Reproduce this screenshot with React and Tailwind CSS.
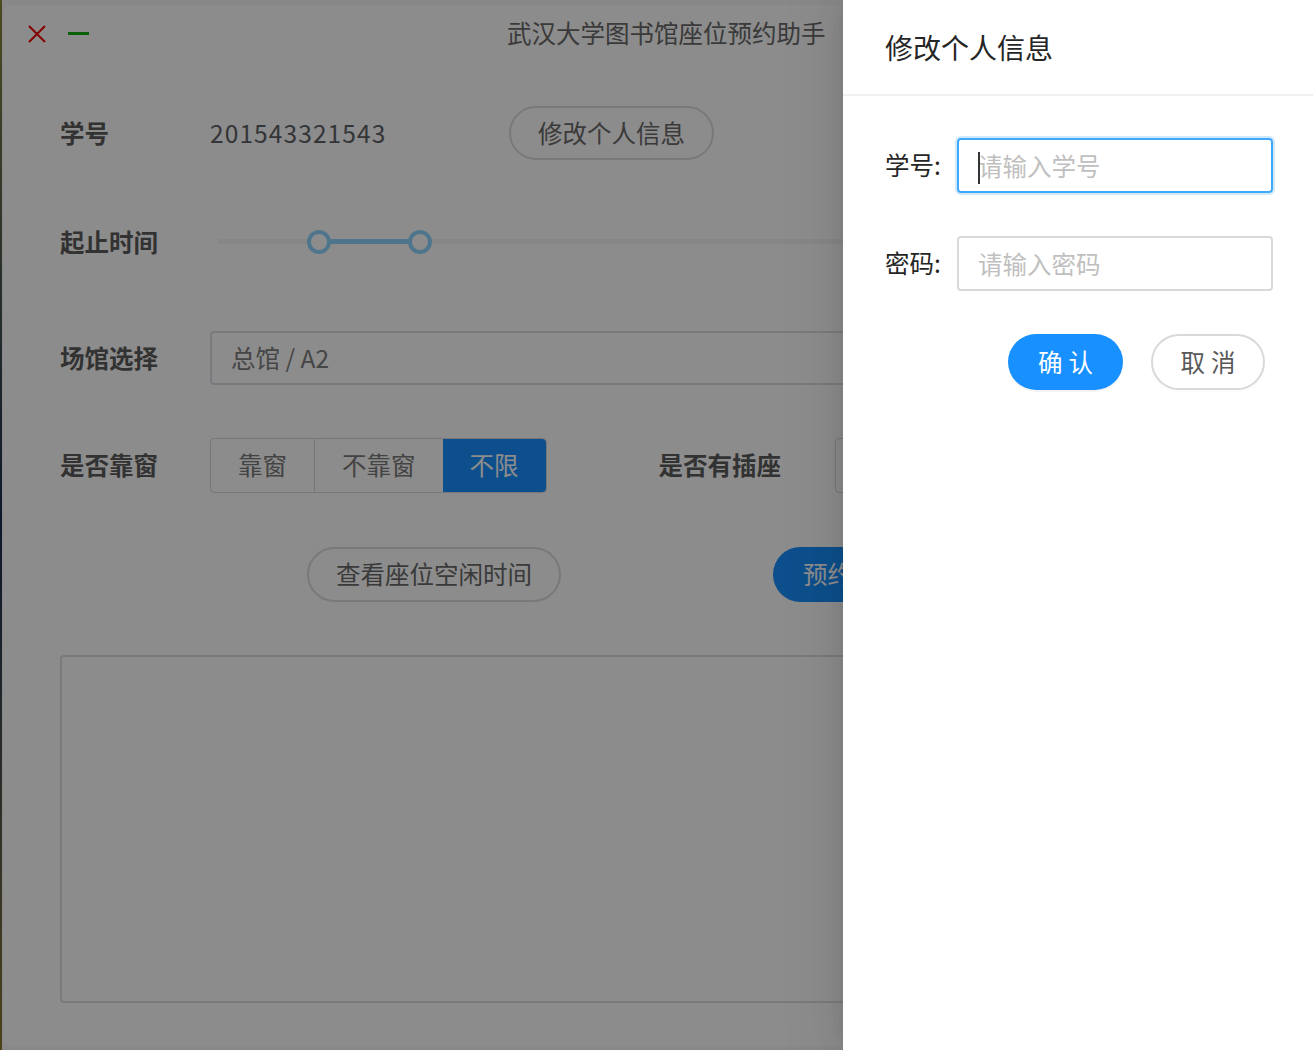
import { useState } from 'react'

const font = { fontFamily: '"Noto Sans CJK SC", "Noto Sans", sans-serif' }

function Label({ children }) {
  return <div className="w-[150px] shrink-0 text-[24.5px] font-bold text-[#5c5c5c]">{children}</div>
}

function Segmented({ options, value }) {
  return (
    <div className="flex h-[55px] rounded-[4px] border border-[#d9d9d9]">
      {options.map((opt, i) => (
        <div
          key={opt}
          className={
            'flex items-center justify-center px-[27px] text-[24.5px] ' +
            (opt === value
              ? 'bg-[#1890ff] text-white rounded-r-[4px]'
              : 'text-[#7a7a7a] ' + (i > 0 ? 'border-l border-[#d9d9d9]' : ''))
          }
        >
          {opt}
        </div>
      ))}
    </div>
  )
}

function TimeRange() {
  return (
    <div className="relative ml-[8px] h-[28px] flex-1">
      <div className="absolute left-0 right-0 top-[11px] h-[5px] rounded-full bg-[#f4f4f4]" />
      <div className="absolute left-[101px] top-[11px] h-[5px] w-[101px] bg-[#91d5ff]" />
      <span className="absolute left-[89px] top-[2px] h-[24px] w-[24px] rounded-full border-[4px] border-[#91d5ff] bg-white" />
      <span className="absolute left-[190px] top-[2px] h-[24px] w-[24px] rounded-full border-[4px] border-[#91d5ff] bg-white" />
    </div>
  )
}

function MainWindow() {
  return (
    <div className="mb-[4px] mt-[5px] flex flex-1 flex-col rounded-[7px] bg-white">
      {/* title bar */}
      <div className="flex h-[56px] items-center pl-[24px]">
        <svg width="20" height="20" viewBox="0 0 20 20" className="mt-[1px]">
          <path d="M2 2 L18 18 M18 2 L2 18" stroke="#f20000" strokeWidth="2" />
        </svg>
        <span className="ml-[21px] h-[3px] w-[21px] bg-[#12b012]" />
        <h1 className="ml-[418px] text-[24.5px] text-[#6a6a6a]">武汉大学图书馆座位预约助手</h1>
      </div>

      <div className="flex flex-col pl-[57px] pr-[60px]">
        <div className="mt-[45px] flex h-[54px] items-center">
          <Label>学号</Label>
          <span className="w-[299px] text-[24.5px] tracking-[1.1px] text-[#606266]">201543321543</span>
          <button className="h-[54px] rounded-full border-2 border-[#dcdcdc] px-[27px] text-[24.5px] text-[#6b6b6b]">
            修改个人信息
          </button>
        </div>

        <div className="mt-[55px] flex h-[54px] items-center">
          <Label>起止时间</Label>
          <TimeRange />
        </div>

        <div className="mt-[62px] flex h-[54px] items-center">
          <Label>场馆选择</Label>
          <div className="flex h-[54px] flex-1 items-center rounded-[4px] border-2 border-[#dcdfe6] px-[19px] text-[24.5px] text-[#808080]">
            总馆 / A2
          </div>
        </div>

        <div className="mt-[53px] flex h-[55px] items-center">
          <Label>是否靠窗</Label>
          <Segmented options={['靠窗', '不靠窗', '不限']} value="不限" />
          <div className="ml-[112px] w-[176px] text-[24.5px] font-bold text-[#5c5c5c]">是否有插座</div>
          <Segmented options={['有插座', '无插座', '不限']} value="不限" />
        </div>

        <div className="mt-[54px] flex h-[55px] items-center pl-[247px]">
          <button className="h-[55px] rounded-full border-2 border-[#dcdcdc] px-[27px] text-[24.5px] text-[#6b6b6b]">
            查看座位空闲时间
          </button>
          <button className="ml-[212px] h-[55px] rounded-full bg-[#1890ff] px-[30px] text-[24.5px] text-white">
            预约座位
          </button>
        </div>

        <div className="mt-[53px] h-[348px] rounded-[4px] border-2 border-[#dcdfe6]" />
      </div>
    </div>
  )
}

function InfoDrawer() {
  const [sid, setSid] = useState('')
  const [pwd, setPwd] = useState('')
  return (
    <aside className="absolute right-0 top-0 flex h-full w-[470px] flex-col bg-white shadow-[-6px_0_16px_-8px_rgba(0,0,0,0.08),-9px_0_28px_0_rgba(0,0,0,0.05),-12px_0_48px_16px_rgba(0,0,0,0.03)]">
      <div className="flex h-[96px] items-center border-b-2 border-[#f0f0f0] pl-[42px]">
        <h2 className="text-[28px] text-[#262626]">修改个人信息</h2>
      </div>
      <div className="flex flex-col pl-[42px] pt-[42px]">
        <div className="flex h-[55px] items-center">
          <span className="w-[72px] text-[24.5px] text-[#262626]">学号:</span>
          <div className="relative h-[55px] w-[316px] rounded-[4px] border-2 border-[#40a9ff] shadow-[0_0_0_2px_rgba(24,144,255,0.2)]">
            <input
              value={sid}
              onChange={(e) => setSid(e.target.value)}
              placeholder="请输入学号"
              className="h-full w-full bg-transparent px-[19px] text-[24.5px] text-[#262626] outline-none placeholder:text-[#bfbfbf]"
            />
            <span className="absolute left-[19px] top-[12px] h-[32px] w-[2px] bg-[#333]" />
          </div>
        </div>
        <div className="mt-[43px] flex h-[55px] items-center">
          <span className="w-[72px] text-[24.5px] text-[#262626]">密码:</span>
          <input
            type="password"
            value={pwd}
            onChange={(e) => setPwd(e.target.value)}
            placeholder="请输入密码"
            className="h-[55px] w-[316px] rounded-[4px] border-2 border-[#d9d9d9] px-[19px] text-[24.5px] outline-none placeholder:text-[#bfbfbf]"
          />
        </div>
        <div className="mt-[43px] flex items-center gap-[28px] pl-[123px]">
          <button className="h-[56px] w-[115px] rounded-full bg-[#1890ff] pl-[6px] text-[24.5px] tracking-[6px] text-white shadow-[0_2px_0_rgba(0,0,0,0.045)]">
            确认
          </button>
          <button className="h-[56px] w-[114px] rounded-full border-2 border-[#d9d9d9] bg-white pl-[6px] text-[24.5px] tracking-[6px] text-[#595959] shadow-[0_2px_0_rgba(0,0,0,0.016)]">
            取消
          </button>
        </div>
      </div>
    </aside>
  )
}

export default function App() {
  return (
    <div style={font} className="relative flex h-[1050px] w-[1313px] overflow-hidden bg-[#f7f7f7]">
      <div className="w-[2px] shrink-0 bg-gradient-to-b from-[#8a8a3a] via-[#1c2c50] to-[#8a7a30]" />
      <div className="w-[1px] shrink-0" />
      <MainWindow />
      {/* drawer mask */}
      <div className="absolute inset-0 bg-black/45" />
      <InfoDrawer />
    </div>
  )
}
